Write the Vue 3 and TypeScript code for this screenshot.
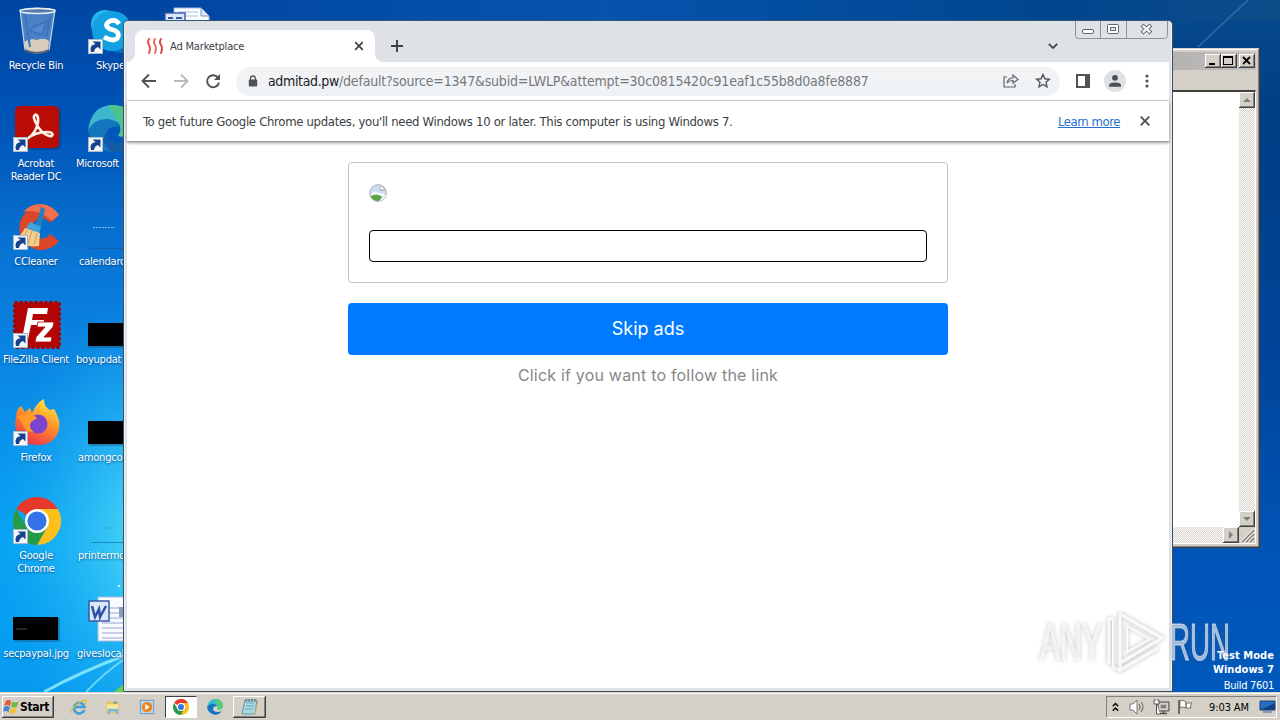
<script setup lang="ts">
interface DesktopItem {
  kind: string
  lines: string[]
  shortcut?: boolean
  indent?: number
}

const firstColumn: DesktopItem[] = [
  { kind: 'bin', lines: ['Recycle Bin'] },
  { kind: 'acrobat', lines: ['Acrobat', 'Reader DC'], shortcut: true },
  { kind: 'ccleaner', lines: ['CCleaner'], shortcut: true },
  { kind: 'filezilla', lines: ['FileZilla Client'], shortcut: true },
  { kind: 'firefox', lines: ['Firefox'], shortcut: true },
  { kind: 'chrome', lines: ['Google', 'Chrome'], shortcut: true },
  { kind: 'black', lines: ['secpaypal.jpg'] },
]

const secondColumn: DesktopItem[] = [
  { kind: 'skype', lines: ['Skype'], shortcut: true, indent: 22 },
  { kind: 'edge', lines: ['Microsoft'], shortcut: true, indent: 2 },
  { kind: 'faint', lines: ['calendarc'], indent: 5 },
  { kind: 'black', lines: ['boyupdat'], indent: 2 },
  { kind: 'black', lines: ['amongcor'], indent: 4 },
  { kind: 'faintlow', lines: ['printermc'], indent: 4 },
  { kind: 'word', lines: ['giveslocal'], indent: 3 },
]

const columns = [firstColumn, secondColumn]
</script>

<template>
  <div class="desktop">
    <svg class="wallpaper" viewBox="0 0 1280 720" preserveAspectRatio="none">
      <defs>
        <linearGradient id="sky" x1="0" y1="0" x2="0" y2="1">
          <stop offset="0" stop-color="#0046a2" />
          <stop offset=".17" stop-color="#0054b8" />
          <stop offset=".35" stop-color="#0874d4" />
          <stop offset=".55" stop-color="#0a8ce8" />
          <stop offset=".75" stop-color="#08a4f4" />
          <stop offset="1" stop-color="#0698ee" />
        </linearGradient>
        <linearGradient id="skyRight" x1="0" y1="0" x2="0" y2="1">
          <stop offset="0" stop-color="#06488c" />
          <stop offset=".15" stop-color="#003e84" />
          <stop offset=".5" stop-color="#00459a" />
          <stop offset=".8" stop-color="#0055b8" />
          <stop offset="1" stop-color="#0059bc" />
        </linearGradient>
        <linearGradient id="topShade" x1="0" y1="0" x2="1" y2="0">
          <stop offset="0" stop-color="#0046a2" />
          <stop offset=".4" stop-color="#0653ae" />
          <stop offset=".8" stop-color="#00468e" />
          <stop offset="1" stop-color="#0d4c88" />
        </linearGradient>
        <radialGradient id="glow">
          <stop offset="0" stop-color="#5ce4f8" stop-opacity=".9" />
          <stop offset=".5" stop-color="#38c8f6" stop-opacity=".5" />
          <stop offset="1" stop-color="#20b0f0" stop-opacity="0" />
        </radialGradient>
      </defs>
      <rect width="1280" height="720" fill="url(#sky)" />
      <ellipse cx="150" cy="535" rx="150" ry="240" fill="url(#glow)" />
      <rect x="150" width="1130" height="24" fill="url(#topShade)" />
      <rect x="1160" y="20" width="120" height="680" fill="url(#skyRight)" />
      <path d="M1198 47 1248 0" stroke="#5d8fbd" stroke-width="1.5" opacity=".5" />
      <path d="M44 692Q80 672 126 655" fill="none" stroke="#8eebff" stroke-width="3" opacity=".85" />
      <path d="M86 692Q105 672 126 658" fill="none" stroke="#8eebff" stroke-width="2" opacity=".7" />
      <path d="m114 692 12-10v10z" fill="#62cf55" />
      <circle cx="119" cy="586" r="1.2" fill="#c8f6ff" />
    </svg>

    <div class="icon-grid">
      <div v-for="(col, c) in columns" :key="c" class="icon-col" :class="{ second: c === 1 }">
        <div v-for="(item, i) in col" :key="i" class="desk-item">
          <svg class="desk-icon" viewBox="0 0 48 48">
            <g v-if="item.kind === 'bin'">
              <path d="M7 3 12 43Q24 49 36 43L42 3Q24-1 7 3" fill="#a9c6e8" fill-opacity=".45" stroke="#c7d6e6" stroke-width="1.2" />
              <path d="M11 35q6-4 13-2 7-3 12 1l-1 9q-11 5-22 0z" fill="#d8cdbd" />
              <path d="M12 42q12 6 24 0v2q-12 6-24 0z" fill="#5c6470" />
              <path d="M12 8 17 40M20 20l14-6-5 14-12-4zM38 6 33 30" stroke="#3b73c1" stroke-width="2" fill="#6596d5" fill-opacity=".35" />
              <ellipse cx="24.500" cy="4" rx="17.500" ry="2.500" fill="#547eaa" stroke="#e9eef3" stroke-width="1.300" />
            </g>
            <g v-else-if="item.kind === 'acrobat'" transform="translate(1 1)">
              <rect x="2" y="1" width="45" height="43" rx="5" fill="#043a82" opacity=".5" />
              <rect x="1" y="0" width="44" height="42" rx="5" fill="#b80c04" />
              <path d="M12 33C20 30 25 19 24 12c-1-6-6-3-3 3 3 7 8 13 14 15 5 1 5-4-2-4-8 0-16 3-21 8-3 3-2 1 0-1" fill="none" stroke="#fff3ec" stroke-width="2.600" />
            </g>
            <g v-else-if="item.kind === 'ccleaner'">
              <path d="M46 12A22 22 0 1 0 46 38L37 31A10 10 0 1 1 37 20z" fill="#dd4529" />
              <path d="M46 12A22 22 0 0 0 10 9q14-4 29 9z" fill="#f0704f" />
              <path d="M28 4 32 6 28 25 22 23z" fill="#2280bd" />
              <path d="M17 19 28 24 26 30 13 25z" fill="#41a4dc" />
              <path d="M12 25 27 30 26 43Q14 45 2 37 9 31 12 25" fill="#f1cf91" />
              <path d="m14 27-5 11M19 28l-4 13M24 30l-3 12" stroke="#cda05b" stroke-width="1" />
            </g>
            <g v-else-if="item.kind === 'filezilla'">
              <rect x="1.500" y="1.500" width="45" height="45" fill="#b30505" stroke="#a50000" stroke-width="3" stroke-dasharray="3 2" />
              <path d="M9 38 15 7H35L34 13H20L19 19H31L30 24H18L15 38z" fill="#fff" />
              <path d="M25 21H41L40 26 31 36H39L38 41H22L23 36 32 26H24z" fill="#fff" stroke="#b30505" stroke-width=".8" />
            </g>
            <g v-else-if="item.kind === 'firefox'">
              <defs>
                <linearGradient id="fox" x1=".8" y1="0" x2=".3" y2="1"><stop stop-color="#fff04a" /><stop offset=".45" stop-color="#ff9429" /><stop offset="1" stop-color="#f0304d" /></linearGradient>
              </defs>
              <path d="M3 18Q3 10 8 7L12 13 17 9 19 14Q24 3 31 0 31 8 37 11L41 10Q48 21 46 30 42 46 25 46 9 46 4 34 1 27 3 18" fill="url(#fox)" />
              <circle cx="25" cy="25" r="9.500" fill="#7b43ce" />
              <path d="M4 17 13 16 19 15 24 19 18 23Q15 29 21 33 10 33 9 23z" fill="#ff9b28" />
            </g>
            <g v-else-if="item.kind === 'chrome'">
              <path d="M24 24 3.200 12A24 24 0 0 1 44.800 12z" fill="#e5392d" />
              <path d="M3.200 12A24 24 0 0 0 24 48L34.400 30 24 24 13.600 30z" fill="#279a48" />
              <path d="M24 12H44.800A24 24 0 0 1 24 48L34.400 30z" fill="#fbc01b" />
              <circle cx="24" cy="24" r="12" fill="#fff" />
              <circle cx="24" cy="24" r="9.600" fill="#3773e8" />
            </g>
            <g v-else-if="item.kind === 'skype'">
              <circle cx="17" cy="17" r="14" fill="#20b8ec" />
              <circle cx="32" cy="34" r="12" fill="#066ec4" />
              <circle cx="24" cy="24" r="20" fill="#14a1e3" />
              <path d="M31 17Q28 12 22 14q-7 4 0 8 10 2 8 8-3 6-14 0" fill="none" stroke="#fff" stroke-width="4.800" />
            </g>
            <g v-else-if="item.kind === 'edge'">
              <path d="M0 26Q3 0 25 0 47 1 48 22 46 34 30 31 35 24 30 18 20 10 0 26" fill="#3bb7ce" />
              <path d="M20 0Q47-1 48 22 46 34 30 31 36 23 29 15z" fill="#54c878" opacity=".75" />
              <path d="M0 25Q7 13 20 14 29 15 31 22 19 20 18 30 20 43 42 37 36 48 23 47 3 44 0 25" fill="#1476bd" />
              <path d="M18 28Q20 42 42 37 36 48 24 47 11 38 18 28" fill="#125ca6" />
            </g>
            <g v-else-if="item.kind === 'black'">
              <rect x="1" y="23" width="46" height="24" fill="#174c78" opacity=".4" />
              <rect x="0" y="22" width="45" height="23" fill="#000" />
              <path v-if="item.indent === undefined" d="M3 34h11" stroke="#5b5b5b" stroke-width=".8" />
            </g>
            <g v-else-if="item.kind === 'faint'">
              <path d="M5 24.500h22" stroke="#a7d4f3" stroke-width="1.200" stroke-dasharray="2 1" opacity=".75" />
              <path d="M2 45.500h46" stroke="#155fa8" stroke-width="1" />
            </g>
            <g v-else-if="item.kind === 'faintlow'">
              <path d="M15 31h9" stroke="#43aad3" stroke-width="1" />
              <path d="M3 45.500h45" stroke="#1b8cb9" stroke-width="1" />
            </g>
            <g v-else-if="item.kind === 'word'">
              <path d="M10 2H46V46H10z" fill="#f8fafe" stroke="#adbddf" />
              <path d="M14 13h29M14 18h29M14 23h29M14 28h29M14 33h29M14 38h29M14 43h29" stroke="#96a7d7" />
              <rect x="31" y="12" width="10" height="10" fill="#879fbc" />
              <rect x="1" y="6" width="20" height="20" fill="#dae6fa" stroke="#3758a4" stroke-width="1.500" />
              <path d="m4 11 3 11 4-8 1 8 6-11" fill="none" stroke="#2e50a6" stroke-width="2.500" />
            </g>
            <g v-if="item.shortcut">
              <rect x=".5" y="32.500" width="14" height="14" fill="#f4f7fa" stroke="#aab9c9" />
              <path d="M3 45Q1 38 7.500 37L4.500 34.500H12.500V42.500L10 40q-3.500 1-4 5z" fill="#16418b" />
            </g>
          </svg>
          <div class="desk-label" :class="{ left: item.indent !== undefined }" :style="{ paddingLeft: (item.indent ?? 0) + 'px' }">
            <div v-for="line in item.lines" :key="line">{{ line }}</div>
          </div>
        </div>
      </div>
    </div>

    <svg class="doc-peek" viewBox="0 0 48 20">
      <path d="M10 16V1h27l8 8v7z" fill="#fafcff" stroke="#a6b8dc" />
      <path d="M37 1v8h8" fill="#dce6f7" stroke="#7a92c0" />
      <path d="M14 5h20M14 9h20" stroke="#aebcdf" />
      <rect x="1" y="6" width="20" height="12" fill="#dae6fa" stroke="#3758a4" stroke-width="1.400" />
      <path d="M4 11h5m3 0h6" stroke="#3758a4" stroke-width="2" />
    </svg>

    <section class="notepad">
      <div class="np-title">
        <span class="np-btn"><svg viewBox="0 0 14 13"><path d="M4 9h6v2H4z" /></svg></span>
        <span class="np-btn"><svg viewBox="0 0 14 13"><path d="M2 2h10v9H2zm1 2v6h8V4z" fill-rule="evenodd" /></svg></span>
        <span class="np-btn last"><svg viewBox="0 0 14 13"><path d="m4 3 7 7m0-7-7 7" stroke="#000" stroke-width="1.800" /></svg></span>
      </div>
      <div class="np-menu"></div>
      <div class="np-body">
        <div class="np-page"></div>
        <div class="np-scroll vertical">
          <span class="np-arrow"><svg viewBox="0 0 12 12"><path d="m6 4 4 4H2z" /></svg></span>
          <span class="np-arrow"><svg viewBox="0 0 12 12"><path d="M2 4h8L6 8z" /></svg></span>
        </div>
        <div class="np-scroll horizontal">
          <span class="np-arrow"><svg viewBox="0 0 12 12"><path d="m4 2 4 4-4 4z" /></svg></span>
        </div>
        <svg class="np-grip" viewBox="0 0 16 16"><path d="M3 15 15 3M7 15l8-8M11 15l4-4" stroke="#7f7b74" stroke-width="1.600" /><path d="M1.500 15 15 1.500M5.500 15 15 5.500M9.500 15 15 9.500" stroke="#fff" /></svg>
      </div>
    </section>

    <div class="build-info">
      <b>Test Mode</b>
      <b>Windows 7</b>
      <span>Build 7601</span>
    </div>

    <section class="browser">
      <header class="tabstrip">
        <div class="tab">
          <svg class="favicon" viewBox="0 0 18 16">
            <g fill="none" stroke-width="2" stroke-linecap="round">
              <path d="M3 1q-2 3 0 6t0 8" stroke="#e5544b" /><path d="M9 1q-2 3 0 6t0 8" stroke="#e9705a" /><path d="M15 1q-2 3 0 6t0 8" stroke="#dd4b49" />
            </g>
          </svg>
          <span class="tab-title">Ad Marketplace</span>
          <svg class="tab-close" viewBox="0 0 10 10"><path d="m1.200 1.200 7.600 7.600m0-7.600L1.200 8.800" stroke="#3c4043" stroke-width="1.700" /></svg>
        </div>
        <svg class="new-tab" viewBox="0 0 12 12"><path d="M6 0v12M0 6h12" stroke="#3c4043" stroke-width="1.900" /></svg>
        <svg class="tab-search" viewBox="0 0 10 6"><path d="m.8.8 4.200 4.200L9.200.8" fill="none" stroke="#3c4043" stroke-width="1.700" /></svg>
        <svg class="caption-buttons" viewBox="0 0 94 18">
          <path d="M.5 0v14.500q0 3 3 3h86q3 0 3-3V0M25.500 0v17M51.500 0v17" fill="none" stroke="#8c929c" />
          <rect x="7.500" y="8.500" width="11" height="4" rx="1.500" fill="#fff" stroke="#62666e" />
          <rect x="32.500" y="3.500" width="11" height="9" rx="1" fill="#fff" stroke="#62666e" />
          <rect x="35.500" y="6.500" width="5" height="3" fill="#e3e6ea" stroke="#62666e" />
          <path d="m67 4 9 8m0-8-9 8" stroke="#62666e" stroke-width="4.200" /><path d="m67.700 4.600 7.600 6.800m0-6.800-7.600 6.800" stroke="#fff" stroke-width="2.200" />
        </svg>
      </header>
      <nav class="toolbar">
        <svg class="nav-icon" viewBox="0 0 16 16"><path d="M15 8H2m6-6.500L1.500 8 8 14.500" fill="none" stroke="#505357" stroke-width="1.900" /></svg>
        <svg class="nav-icon" viewBox="0 0 16 16"><path d="M1 8h13M8 1.500 14.500 8 8 14.500" fill="none" stroke="#b8babd" stroke-width="1.900" /></svg>
        <svg class="nav-icon" viewBox="0 0 16 16"><path d="M13.200 5A6 6 0 1 0 14 9.500" fill="none" stroke="#505357" stroke-width="1.900" /><path d="M15 1v6H9z" fill="#505357" /></svg>
        <div class="omnibox">
          <svg class="lock" viewBox="0 0 10 13"><path d="M2.500 5V3.500a2.500 2.500 0 0 1 5 0V5" fill="none" stroke="#505357" stroke-width="1.300" /><rect x=".8" y="4.500" width="8.400" height="7" rx="1" fill="#505357" /></svg>
          <span class="url"><b>admitad.pw</b>/default?source=1347&amp;subid=LWLP&amp;attempt=30c0815420c91eaf1c55b8d0a8fe8887</span>
          <svg class="share" viewBox="0 0 16 14"><path d="M4 3H1v10h11v-3M4 9q1-5 6-5V1l5 4.500L10 9V6.500Q6 6.500 4 9z" fill="none" stroke="#62666a" stroke-width="1.200" /></svg>
          <svg class="star" viewBox="0 0 16 16"><path d="m8 1.500 1.900 4.300 4.600.4-3.500 3.100 1 4.600-4-2.400-4 2.400 1-4.600L1.500 6.200l4.600-.4z" fill="none" stroke="#505357" stroke-width="1.400" /></svg>
        </div>
        <svg class="panel" viewBox="0 0 14 14"><path d="M0 0h14v14H0zm2 2v10h7V2z" fill="#4f5256" fill-rule="evenodd" /></svg>
        <svg class="avatar" viewBox="0 0 22 22"><circle cx="11" cy="11" r="11" fill="#dfe1e5" /><circle cx="11" cy="7.800" r="2.900" fill="#4b5058" /><path d="M5 16.800v-1.300q0-3 6-3t6 3v1.300z" fill="#4b5058" /></svg>
        <svg class="menu-dots" viewBox="0 0 4 14"><circle cx="2" cy="2" r="1.600" /><circle cx="2" cy="7" r="1.600" /><circle cx="2" cy="12" r="1.600" /></svg>
      </nav>
      <div class="infobar">
        <span class="info-text">To get future Google Chrome updates, you'll need Windows 10 or later. This computer is using Windows 7.</span>
        <a class="learn">Learn more</a>
        <svg class="info-close" viewBox="0 0 10 10"><path d="m.7.700 8.600 8.600m0-8.600L.7 9.300" stroke="#505357" stroke-width="1.900" /></svg>
      </div>
      <main class="page">
        <div class="card">
          <svg class="broken" viewBox="0 0 18 18">
            <defs><clipPath id="round"><circle cx="9" cy="9" r="8.500" /></clipPath></defs>
            <g clip-path="url(#round)"><path d="M0 0h18v18H0z" fill="#cbdcf4" /><path d="M2 11q2-5 6-3t7 1v3H2z" fill="#f3f8fd" /><path d="M0 13q8-5 13 0l-3 5H0z" fill="#57a443" /><path d="M9 18 18 9v9z" fill="#fff" /><path d="M10 0v5h8V0z" fill="#fff" /><path d="M11 1v5h6L11 1z" fill="#fff" stroke="#88939d" stroke-width=".8" /></g>
            <circle cx="9" cy="9" r="8.400" fill="none" stroke="#b5b9be" />
          </svg>
          <div class="field"></div>
        </div>
        <button class="skip">Skip ads</button>
        <p class="hint">Click if you want to follow the link</p>
      </main>
    </section>

    <svg class="watermark" viewBox="0 0 200 70">
      <g font-family="'Liberation Sans Narrow', 'Liberation Sans', Arial, sans-serif" font-size="51" fill="#fff" fill-opacity=".6" stroke="#fff" stroke-opacity=".6" stroke-width=".9">
        <text x="4" y="54" textLength="62" lengthAdjust="spacingAndGlyphs">ANY</text>
        <text x="134" y="54" textLength="60" lengthAdjust="spacingAndGlyphs">RUN</text>
      </g>
      <g fill="none" stroke="#fff" stroke-opacity=".85" stroke-width="3.200" stroke-linejoin="round">
        <path d="M84 8 126 32 84 57zM77 13h-4v45M84 57v7l38-22" />
        <path d="M91 20 114 33 91 46zM77 13v48l8 4" stroke-width="2.200" />
      </g>
    </svg>

    <footer class="taskbar">
      <div class="start">
        <svg viewBox="0 0 16 16"><path d="M3 2q3-2 5 0L7 7Q4 5 1 7z" fill="#e65732" /><path d="M9 2.500q3 2 6.500 0l-1.500 5q-3 2-6 0z" fill="#72b840" /><path d="M1 8q3-2 6 0l-1.500 5q-3-2-5.500 0z" fill="#4189cf" /><path d="M7.700 8.500q3 2 6 0l-1.300 5q-3 2-6 0z" fill="#f4c133" /></svg>
        <b>Start</b>
      </div>
      <div class="task-slot"><svg viewBox="0 0 18 18"><path d="M15 12.500A6 6 0 1 1 15.300 9H4.500" fill="none" stroke="#3d9fda" stroke-width="3" /><path d="M1 16Q-1 12 7 6q7-6 10-4 1 2-2 5" fill="none" stroke="#eab637" stroke-width="1.400" /></svg></div>
      <div class="task-slot"><svg viewBox="0 0 18 18"><path d="M1 3h6l1 2h8v11H1z" fill="#e4c65e" /><path d="M2 6h13v8H2z" fill="#f8e9a1" /><path d="M3 17v-6h12v6h-3v-3H6v3z" fill="#79b9df" /><path d="M9 4h5" stroke="#70a753" stroke-width="2" /></svg></div>
      <div class="task-slot"><svg viewBox="0 0 18 18"><rect x="1.500" y="1.500" width="15" height="15" fill="#b9daf1" stroke="#6495bd" /><circle cx="9" cy="9" r="6" fill="#ef8521" /><path d="m7 5.500 5 3.500-5 3.500z" fill="#fff" /></svg></div>
      <div class="task-slot pressed"><svg viewBox="0 0 48 48"><path d="M24 24 3.200 12A24 24 0 0 1 44.800 12z" fill="#e5392d" /><path d="M3.200 12A24 24 0 0 0 24 48L34.400 30 24 24 13.600 30z" fill="#279a48" /><path d="M24 12H44.800A24 24 0 0 1 24 48L34.400 30z" fill="#fbc01b" /><circle cx="24" cy="24" r="12" fill="#fff" /><circle cx="24" cy="24" r="9" fill="#3773e8" /></svg></div>
      <div class="task-slot"><svg viewBox="0 0 48 48"><path d="M0 26Q3 0 25 0 47 1 48 22 46 34 30 31 35 24 30 18 20 10 0 26" fill="#37bed1" /><path d="M24 0Q47 0 48 22 46 34 30 31 36 23 29 15z" fill="#5bcb70" /><path d="M0 25Q7 13 20 14 29 15 31 22 19 20 18 30 20 43 44 37 36 48 23 47 3 44 0 25" fill="#1474c0" /></svg></div>
      <div class="task-slot raised"><svg viewBox="0 0 18 18"><path d="M4 2h12l-2 14H1z" fill="#a8d9e0" stroke="#6d929b" /><path d="M5 5h8M5 8h8M4 11h8" stroke="#6aadbd" /><path d="M5 1v3m3-3v3m3-3v3m3-3v3" stroke="#5f6e72" /><path d="m14 17 3-14" stroke="#dcb35d" /></svg></div>
      <div class="tray">
        <svg class="chevrons" viewBox="0 0 7 10"><path d="M.8 4.200 3.500 1.500 6.200 4.200M.8 8.700 3.500 6l2.700 2.700" fill="none" stroke="#000" stroke-width="1.400" /></svg>
        <svg class="volume" viewBox="0 0 16 16"><path d="M1 5h3l4-4v14l-4-4H1z" fill="#fff" stroke="#77746f" /><path d="M10 5q2 3 0 6M12 3q4 5 0 10" fill="none" stroke="#77746f" stroke-width="1.200" /></svg>
        <svg class="network" viewBox="0 0 17 16"><path d="M5 3h11v9H5z" fill="#b7b6b3" stroke="#504e4a" /><path d="M7 5h7v5H7z" fill="#807f7d" stroke="#eee" /><path d="M7 14.500h7M10.500 12v2" stroke="#504e4a" stroke-width="1.500" /><path d="M1 1v4h5V1M3.500 5v10H7M2 0v2m3-2v2" fill="#fff" stroke="#57544f" /></svg>
        <svg class="flag" viewBox="0 0 17 16"><path d="M2 1v14" stroke="#6c6963" stroke-width="2" /><path d="M3 2q3-2 6 1v6q-3-2-6 0zM9 4h6l-1.500 3 .5 2H9z" fill="#fff" stroke="#77746f" /></svg>
        <span class="clock">9:03 AM</span>
        <svg class="monitor" viewBox="0 0 17 14"><path d="M1 1h15v9H1z" fill="#246fc1" stroke="#1c447a" /><path d="M1 10 16 3v7z" fill="#123f87" /><path d="M4 12h9" stroke="#829bb3" stroke-width="2" /></svg>
      </div>
    </footer>
  </div>
</template>

<style>
body { margin: 0; overflow: hidden; }
</style>

<style scoped>
.desktop { position: relative; width: 1280px; height: 720px; overflow: hidden; font-family: 'DejaVu Sans Condensed', 'DejaVu Sans', sans-serif; font-size: 11px; font-stretch: condensed; }
.desktop * { box-sizing: border-box; }
svg { display: block; flex: none; }
.wallpaper { position: absolute; inset: 0; width: 1280px; height: 720px; }
.icon-grid { position: relative; display: flex; padding-top: 7px; }
.icon-col { width: 74px; flex: none; display: flex; flex-direction: column; }
.desk-item { height: 98px; display: flex; flex-direction: column; }
.desk-icon { width: 48px; height: 48px; margin-left: 13px; }
.second .desk-icon { margin-left: 14px; }
.desk-label { margin-top: 4px; width: 72px; line-height: 13px; text-align: center; color: #fff; white-space: nowrap; letter-spacing: -.22px; text-shadow: 0 1px 2px rgba(0, 35, 90, .7); }
.desk-label.left { text-align: left; }
.doc-peek { position: absolute; left: 164px; top: 7px; width: 48px; height: 20px; }

.notepad { position: absolute; left: 1150px; top: 48px; width: 110px; height: 500px; padding: 4px 4px 4px; background: #d4d0c8; display: flex; flex-direction: column; box-shadow: inset -1px -1px #404040, inset 0 1px #d4d0c8, inset -2px -2px #808080, inset 0 2px #fff; }
.np-title { height: 18px; padding: 2px 1px 2px 2px; display: flex; justify-content: flex-end; background: linear-gradient(90deg, #b2b0ae, #c0c0c0); }
.np-btn { width: 16px; height: 14px; background: #d4d0c8; box-shadow: inset -1px -1px #404040, inset 1px 1px #fff, inset -2px -2px #808080; }
.np-btn svg { width: 14px; height: 13px; }
.np-btn.last { margin-left: 2px; }
.np-menu { height: 20px; }
.np-body { flex: 1; display: grid; grid-template-columns: 1fr 16px; grid-template-rows: 1fr 16px; border-top: 2px solid #404040; border-right: 1px solid #fff; border-bottom: 1px solid #fff; }
.np-page { background: #fff; }
.np-scroll { display: flex; background: repeating-conic-gradient(#fff 0 25%, #d4d0c8 0 50%) 0 0 / 2px 2px; }
.np-scroll.vertical { flex-direction: column; justify-content: space-between; }
.np-scroll.horizontal { justify-content: flex-end; }
.np-arrow { width: 16px; height: 16px; padding: 2px; background: #d4d0c8; box-shadow: inset -1px -1px #404040, inset 1px 1px #fff, inset -2px -2px #808080; }
.np-arrow svg { width: 12px; height: 12px; fill: #808080; }
.np-grip { width: 16px; height: 16px; background: #d4d0c8; }

.build-info { position: absolute; right: 6px; top: 649px; color: #fff; display: flex; flex-direction: column; align-items: flex-end; line-height: 14px; }
.build-info b { font-size: 11px; letter-spacing: .05px; }
.build-info span { margin-top: 2px; letter-spacing: -.3px; }

.browser { position: absolute; left: 123px; top: 20px; width: 1050px; height: 672px; border: 1px solid #3f4f60; border-top-color: #305678; border-radius: 5px 5px 2px 2px; padding: 0 3px 3px; background: #dee1e6; display: flex; flex-direction: column; box-shadow: inset 1px 0 #eef0f3, inset -1px 0 #eef0f3; }
.tabstrip { height: 41px; display: flex; align-items: flex-end; position: relative; padding-left: 8px; background: #dee1e6; }
.tab { position: relative; width: 240px; height: 32px; border-radius: 8px 8px 0 0; background: #fff; display: flex; align-items: center; padding: 0 11px; }
.tab::before, .tab::after { content: ''; position: absolute; bottom: 0; width: 8px; height: 8px; }
.tab::before { left: -8px; background: radial-gradient(circle at 0 0, transparent 7.5px, #fff 8px); }
.tab::after { right: -8px; background: radial-gradient(circle at 100% 0, transparent 7.5px, #fff 8px); }
.favicon { width: 18px; height: 16px; }
.tab-title { margin-left: 6px; flex: 1; color: #3c4043; letter-spacing: -.17px; }
.tab-close { width: 10px; height: 10px; }
.new-tab { width: 12px; height: 12px; margin: 0 0 10px 16px; }
.tab-search { width: 10px; height: 6px; margin: 0 111px 13px auto; }
.caption-buttons { position: absolute; right: 0; top: 0; width: 94px; height: 18px; }
.toolbar { height: 39px; background: #fff; display: flex; align-items: center; border-bottom: 1px solid #d9dbde; padding-left: 14px; }
.nav-icon { width: 16px; height: 16px; margin-right: 16px; }
.omnibox { width: 824px; height: 29px; margin-left: -1px; border-radius: 15px; background: linear-gradient(#f3f3f3, #eef3f8); display: flex; align-items: center; padding-left: 12px; }
.lock { width: 10px; height: 13px; }
.url { margin-left: 10px; flex: 1; font: 14px 'DejaVu Sans Condensed', sans-serif; letter-spacing: -.18px; color: #75797e; white-space: nowrap; }
.url b { font-weight: 400; color: #202124; letter-spacing: -.35px; }
.share { width: 16px; height: 14px; }
.star { width: 16px; height: 16px; margin: 0 9px 0 16px; }
.panel { width: 14px; height: 14px; margin-left: 16px; }
.avatar { width: 22px; height: 22px; margin-left: 14px; }
.menu-dots { width: 4px; height: 14px; margin-left: 19px; margin-right: 19px; fill: #505357; }
.infobar { position: relative; z-index: 1; height: 41px; background: #fff; border-bottom: 1px solid #9da0a3; box-shadow: 0 1px 3px rgba(0, 0, 0, .4); display: flex; align-items: center; padding: 0 19px 0 16px; font-size: 13px; color: #3c4043; }
.info-text { flex: 1; white-space: nowrap; letter-spacing: -.31px; }
.learn { color: #2870cf; text-decoration: underline; letter-spacing: -.45px; }
.info-close { width: 10px; height: 10px; margin-left: 20px; }
.page { flex: 1; background: #fff; padding-top: 20px; display: flex; flex-direction: column; align-items: center; }
.card { width: 600px; height: 121px; border: 1px solid #c3c3c3; border-radius: 4px; padding: 21px 20px 0; }
.broken { width: 18px; height: 18px; }
.field { margin-top: 28px; height: 32px; border: 1px solid #000; border-radius: 4px; }
.skip { margin-top: 20px; width: 600px; height: 52px; border: 0; border-radius: 4px; padding: 0 0 2px; background: #007bff; color: #fff; font: 18px Inter, sans-serif; }
.hint { margin: 9px 0 0; font: 16px/22px Inter, sans-serif; letter-spacing: .2px; color: #888; }

.watermark { position: absolute; left: 1036px; top: 606px; width: 200px; height: 70px; overflow: visible; filter: drop-shadow(0 0 2px rgba(90, 90, 90, .5)); }

.taskbar { position: absolute; left: 0; bottom: 0; width: 1280px; height: 28px; padding: 4px 3px 2px 2px; background: #d4d0c8; box-shadow: inset 0 1px #d4d0c8, inset 0 2px #fff; display: flex; }
.start { width: 52px; height: 22px; margin-right: 8px; display: flex; align-items: center; padding-left: 1px; box-shadow: inset -1px -1px #404040, inset 1px 1px #fff, inset -2px -2px #808080; }
.start svg { width: 16px; height: 16px; }
.start b { margin-left: 1px; font-size: 12px; letter-spacing: -.35px; color: #000; }
.task-slot { width: 34px; height: 22px; display: flex; align-items: center; justify-content: center; }
.task-slot svg { width: 16px; height: 16px; }
.task-slot.pressed { width: 32px; margin: 0 1px; background: #fff; border: 1px solid; border-color: #404040 #fff #fff #404040; }
.task-slot.raised { width: 33px; margin-left: 1px; background: #d4d0c8; box-shadow: inset -1px -1px #404040, inset 1px 1px #fff, inset -2px -2px #808080; }
.task-slot.raised svg { width: 18px; height: 18px; }
.tray { margin-left: auto; width: 171px; height: 22px; border: 1px solid; border-color: #808080 #fff #fff #808080; display: flex; align-items: center; padding-left: 5px; }
.chevrons { width: 7px; height: 10px; }
.volume { width: 16px; height: 16px; margin-left: 10px; }
.network { width: 17px; height: 16px; margin-left: 8px; }
.flag { width: 17px; height: 16px; margin-left: 7px; }
.clock { margin-left: 15px; width: 42px; color: #000; white-space: nowrap; letter-spacing: -.1px; }
.monitor { width: 17px; height: 14px; margin-left: 9px; }
</style>
